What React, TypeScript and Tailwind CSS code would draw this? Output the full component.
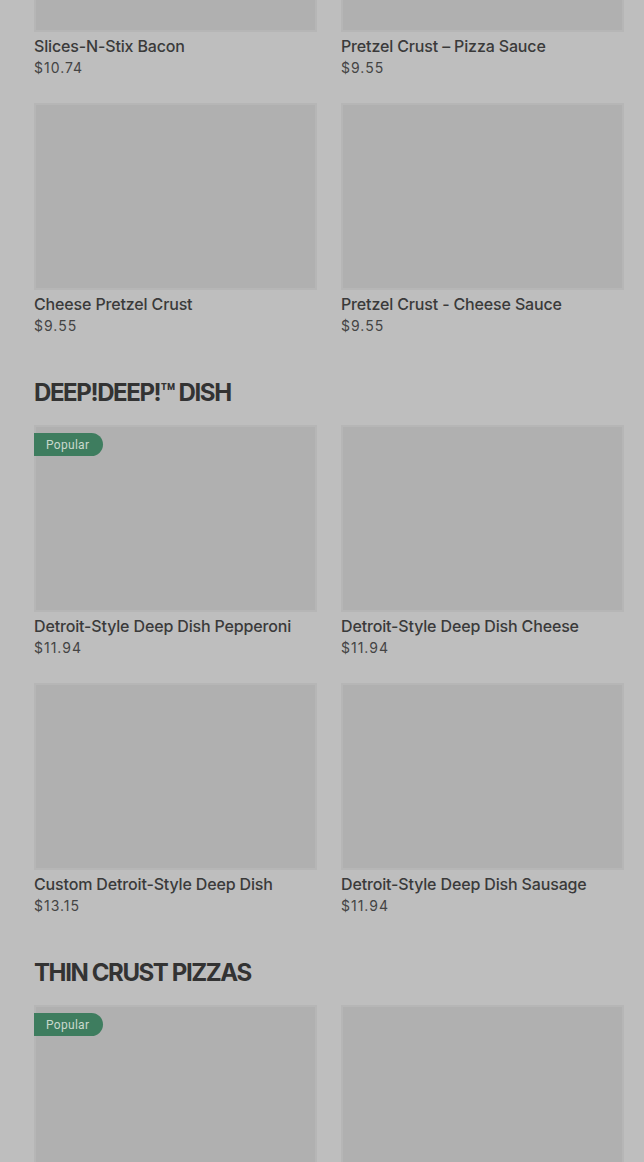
type Item = { name?: string; price?: string; popular?: boolean };

const sections: { title?: string; items: Item[] }[] = [
  {
    items: [
      { name: 'Slices-N-Stix Bacon', price: '$10.74' },
      { name: 'Pretzel Crust – Pizza Sauce', price: '$9.55' },
      { name: 'Cheese Pretzel Crust', price: '$9.55' },
      { name: 'Pretzel Crust - Cheese Sauce', price: '$9.55' },
    ],
  },
  {
    title: 'DEEP!DEEP!™ DISH',
    items: [
      { name: 'Detroit-Style Deep Dish Pepperoni', price: '$11.94', popular: true },
      { name: 'Detroit-Style Deep Dish Cheese', price: '$11.94' },
      { name: 'Custom Detroit-Style Deep Dish', price: '$13.15' },
      { name: 'Detroit-Style Deep Dish Sausage', price: '$11.94' },
    ],
  },
  {
    title: 'THIN CRUST PIZZAS',
    // names below the fold are not shown in the shot
    items: [{ popular: true }, {}],
  },
];

function Card({ item }: { item: Item }) {
  return (
    <div className="flex flex-col">
      <div className="relative h-[187px] bg-[#b0b0b0] border-2 border-[#b6b6b6]">
        {item.popular && (
          <span className="absolute left-[-2px] top-[6px] h-[23px] pl-3 pr-[14px] flex items-center rounded-r-full bg-[#3e7d5f] text-[#c9d9cd] text-[12px] tracking-[0.3px] font-['Roboto',sans-serif]">
            Popular
          </span>
        )}
      </div>
      {item.name && (
        <>
          <div className="mt-[2px] text-[16px] leading-6 font-medium tracking-[-0.15px] text-[#3a3a3a] font-['Inter',sans-serif] truncate">
            {item.name}
          </div>
          <div className="text-[14px] leading-5 text-[#444] tracking-[1px] font-['Inter',sans-serif]">{item.price}</div>
        </>
      )}
    </div>
  );
}

export default function App() {
  return (
    <div className="h-[1162px] w-[644px] overflow-hidden bg-[#bebebe]">
      <div className="mt-[-155px] pl-[34px] pr-[20px]">
        {sections.map((s, i) => (
          <section key={i}>
            {s.title && (
              <h2 className="mt-[41px] mb-[16px] text-[24px] leading-8 font-bold tracking-[-1.4px] text-[#333] font-['Inter',sans-serif]">
                {s.title}
              </h2>
            )}
            <div className="grid grid-cols-2 gap-x-6 gap-y-[25px]">
              {s.items.map((it, j) => (
                <Card key={j} item={it} />
              ))}
            </div>
          </section>
        ))}
      </div>
    </div>
  );
}
